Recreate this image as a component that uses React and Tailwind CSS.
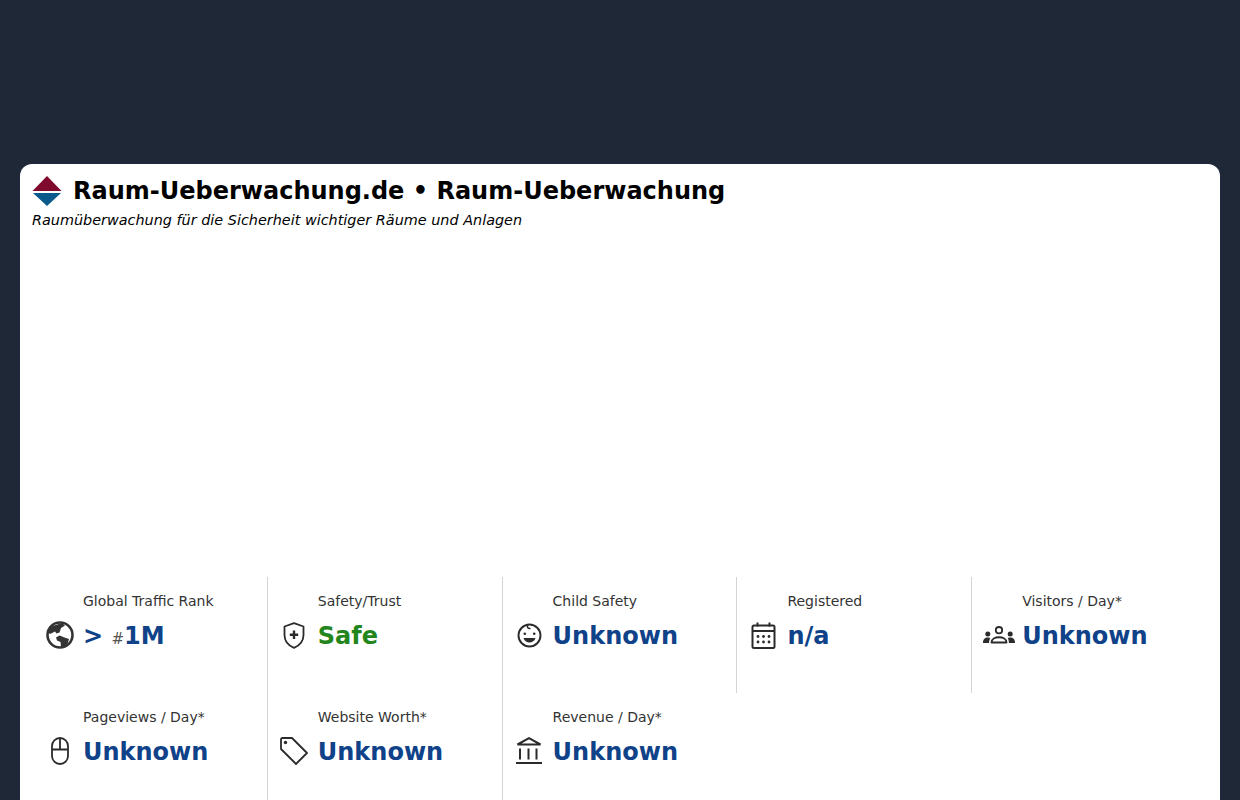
import React from "react";

const ink = "#2b2b2b";

function GlobeIcon() {
  return (
    <svg width="28" height="28" viewBox="0 0 28 28" fill="none" stroke="#333" strokeWidth="2.600">
      <circle cx="14" cy="14" r="12.500" />
      <path d="M5 5.500 16 2l3 2.500-4 2.500-1.500 4.500-3 1-1.500-2-5 2.500L2 11Z" fill="#333" stroke="none" />
      <path d="M10 16.500l3.500-2 5 2 4.500 1.500-1.500 5-4 3.500-2.500-.5-.5-5-3.500-1.500Z" fill="#333" stroke="none" />
    </svg>
  );
}

function ShieldIcon() {
  return (
    <svg width="22" height="27" viewBox="0 0 22 27" fill="none" stroke={ink} strokeWidth="1.800" strokeLinejoin="round">
      <path d="M11 1.200 20.500 4.500V13c0 6-3.800 10.500-9.500 12.800C5.300 23.500 1.500 19 1.500 13V4.500L11 1.200Z" />
      <path d="M11 8.500v8.500M6.800 12.700h8.400" strokeWidth="2.400" />
    </svg>
  );
}

function KidIcon() {
  return (
    <svg width="25" height="25" viewBox="0 0 25 25" fill="none" stroke={ink} strokeWidth="1.900">
      <circle cx="12.500" cy="12.500" r="11" />
      <path d="M11 1.800c-1.500 1.500-.5 4 2.500 3.700" strokeWidth="1.500" />
      <circle cx="7.800" cy="10.800" r="1.300" fill={ink} stroke="none" />
      <circle cx="17.200" cy="10.800" r="1.300" fill={ink} stroke="none" />
      <path d="M6.500 15h12c-.8 2.800-3.300 4.500-6 4.500s-5.200-1.700-6-4.500Z" fill={ink} stroke="none" />
    </svg>
  );
}

function CalendarIcon() {
  return (
    <svg width="25" height="27" viewBox="0 0 25 27" fill="none" stroke={ink} strokeWidth="2">
      <rect x="1.500" y="3.500" width="22" height="22.500" rx="1.500" />
      <path d="M1.500 9h22M6.500 .5v4M18.500 .5v4" />
      <g fill={ink} stroke="none">
        <circle cx="7" cy="14.500" r="1.400" />
        <circle cx="12.500" cy="14.500" r="1.400" />
        <circle cx="18" cy="14.500" r="1.400" />
        <circle cx="7" cy="20" r="1.400" />
        <circle cx="12.500" cy="20" r="1.400" />
        <circle cx="18" cy="20" r="1.400" />
      </g>
    </svg>
  );
}

function GroupIcon() {
  return (
    <svg width="32" height="18" viewBox="0 0 32 18" fill="none" stroke={ink} strokeWidth="1.800">
      <circle cx="16" cy="4.200" r="3.200" />
      <path d="M8.500 16.500c0-7 15-7 15 0Z" strokeLinejoin="round" />
      <g fill={ink} stroke="none">
        <circle cx="4.800" cy="8" r="2.500" />
        <circle cx="27.200" cy="8" r="2.500" />
        <path d="M0 17c0-4 2-5.500 5-5.500 1 0 1.800.2 2.300.5-.8 1.300-1.200 3-1.200 5H0Z" />
        <path d="M32 17c0-4-2-5.500-5-5.500-1 0-1.800.2-2.300.5.8 1.300 1.200 3 1.200 5H32Z" />
      </g>
    </svg>
  );
}

function MouseIcon() {
  return (
    <svg width="18" height="28" viewBox="0 0 18 28" fill="none" stroke={ink} strokeWidth="1.800">
      <rect x="1" y="1" width="16" height="26" rx="8" />
      <path d="M1 12.500h16M9 1v11.500" />
    </svg>
  );
}

function TagIcon() {
  return (
    <svg width="28" height="28" viewBox="0 0 28 28" fill="none" stroke={ink} strokeWidth="1.800" strokeLinejoin="round">
      <path d="M1 2.500C1 1.600 1.600 1 2.500 1H12l15 15-11 11L1 12V2.500Z" />
      <circle cx="5.500" cy="5.500" r="1.700" fill={ink} stroke="none" />
    </svg>
  );
}

function BankIcon() {
  return (
    <svg width="28" height="28" viewBox="0 0 28 28" fill="none" stroke={ink} strokeWidth="2">
      <path d="M14 1.200 2.500 7.500h23L14 1.200Z" />
      <path d="M5 11.500v11M13.500 11.500v11M21.500 11.500v11" />
      <path d="M1 26h26" />
    </svg>
  );
}

const stats = [
  { label: "Global Traffic Rank", icon: <GlobeIcon />, rank: true, first: true },
  { label: "Safety/Trust", icon: <ShieldIcon />, value: "Safe", green: true },
  { label: "Child Safety", icon: <KidIcon />, value: "Unknown" },
  { label: "Registered", icon: <CalendarIcon />, value: "n/a" },
  { label: "Visitors / Day*", icon: <GroupIcon />, value: "Unknown" },
  { label: "Pageviews / Day*", icon: <MouseIcon />, value: "Unknown", first: true },
  { label: "Website Worth*", icon: <TagIcon />, value: "Unknown" },
  { label: "Revenue / Day*", icon: <BankIcon />, value: "Unknown" },
];

export default function App() {
  return (
    <div className="h-[800px] overflow-hidden bg-[#1e2836] px-5 pt-[164px] font-['DejaVu_Sans',sans-serif]">
      <div className="h-[700px] rounded-t-xl bg-white pl-3 pr-[14px] pt-3">
        <div className="flex h-[30px] items-center gap-[11px]">
          <svg width="30" height="30" viewBox="0 0 30 30">
            <path d="M15 0 29.500 15H.5L15 0Z" fill="#7f0a2d" />
            <path d="M1 17h28L15 30 1 17Z" fill="#0b5a8c" />
          </svg>
          <h1 className="text-2xl font-bold leading-[30px] text-black">
            Raum-Ueberwachung.de • Raum-Ueberwachung
          </h1>
        </div>
        <p className="mt-[4px] h-[367px] text-[14.4px] italic leading-[20px] text-black">
          Raumüberwachung für die Sicherheit wichtiger Räume und Anlagen
        </p>
        <div className="grid grid-cols-5">
          {stats.map((s) => (
            <div
              key={s.label}
              className={`h-[116px] border-l pt-[14px] ${s.first ? "border-transparent" : "border-[#d4d4d4]"}`}
            >
              <div className="pl-[50px] text-sm leading-5 text-[#333]">{s.label}</div>
              <div className="mt-[5px] flex h-[40px] items-center">
                <div className="mb-[2px] flex w-[50px] shrink-0 items-center justify-center pl-[3px]">{s.icon}</div>
                <div className={`text-2xl font-bold ${s.green ? "text-[#23861c]" : "text-[#0f4289]"}`}>
                  {s.rank ? (
                    <>
                      &gt; <span className="text-[15px] font-normal text-[#555]">#</span>1M
                    </>
                  ) : (
                    s.value
                  )}
                </div>
              </div>
            </div>
          ))}
        </div>
      </div>
    </div>
  );
}
